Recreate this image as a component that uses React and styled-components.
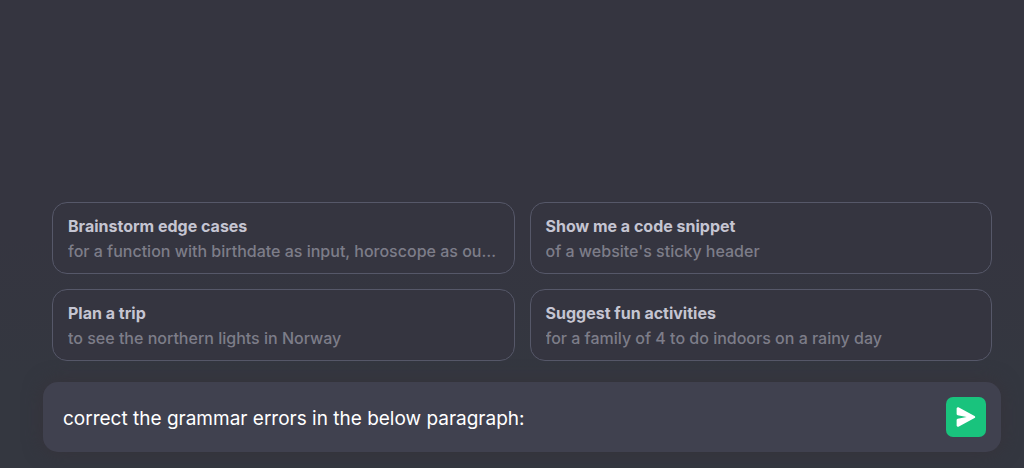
// App.jsx
import { useState } from "react";
import styled, { createGlobalStyle } from "styled-components";

const GlobalStyle = createGlobalStyle`
  * {
    box-sizing: border-box;
  }

  body {
    margin: 0;
    background: #353540;
    font-family: Inter, "Liberation Sans", sans-serif;
  }
`;

const Page = styled.main`
  display: flex;
  flex-direction: column;
  justify-content: flex-end;
  min-height: 100vh;
  padding: 16px 23px 16px 43px;
  background: linear-gradient(to bottom, #353540 50%, #343740 80%);
`;

const Suggestions = styled.div`
  display: grid;
  grid-template-columns: 1fr 1fr;
  gap: 15px;
  margin: 0 9px 21px;
`;

const SuggestionCard = styled.button`
  min-width: 0;
  padding: 11px 15px 9px;
  border: 1px solid #565869;
  border-radius: 15px;
  background: #353540;
  font-family: inherit;
  font-size: 16px;
  line-height: 25px;
  text-align: left;
  cursor: pointer;
`;

const SuggestionTitle = styled.span`
  display: block;
  color: #c5c5d2;
  font-weight: 700;
`;

const SuggestionText = styled.span`
  display: block;
  overflow: hidden;
  color: #7d7d89;
  font-weight: 500;
  text-overflow: ellipsis;
  white-space: nowrap;
`;

const Composer = styled.form`
  display: flex;
  align-items: center;
  gap: 15px;
  padding: 15px 15px 15px 20px;
  border-radius: 15px;
  background: #40414f;
  box-shadow: 0 0 19px rgba(56, 48, 56, 0.7);
`;

const MessageInput = styled.input`
  flex: 1;
  min-width: 0;
  height: 40px;
  padding: 2px 0 0;
  border: 0;
  outline: 0;
  background: transparent;
  color: #fff;
  font-family: inherit;
  font-size: 19px;
`;

const SendButton = styled.button`
  display: flex;
  padding: 10px;
  border: 0;
  border-radius: 7px;
  background: #19c37d;
  color: #fff;
  cursor: pointer;
`;

const suggestions = [
  {
    title: "Brainstorm edge cases",
    text: "for a function with birthdate as input, horoscope as output",
  },
  { title: "Show me a code snippet", text: "of a website's sticky header" },
  { title: "Plan a trip", text: "to see the northern lights in Norway" },
  {
    title: "Suggest fun activities",
    text: "for a family of 4 to do indoors on a rainy day",
  },
];

function SendIcon() {
  return (
    <svg width="20" height="20" viewBox="0 0 16 16" aria-hidden="true">
      <path
        d="M.5 1.163A1 1 0 0 1 1.97.28l12.868 6.837a1 1 0 0 1 0 1.766L1.969 15.72A1 1 0 0 1 .5 14.836V10.33a1 1 0 0 1 .816-.983L8.5 8 1.316 6.653A1 1 0 0 1 .5 5.67V1.163Z"
        fill="currentColor"
      />
    </svg>
  );
}

export default function App() {
  const [message, setMessage] = useState(
    "correct the grammar errors in the below paragraph:"
  );

  return (
    <>
      <GlobalStyle />
      <Page>
        <Suggestions>
          {suggestions.map(({ title, text }) => (
            <SuggestionCard
              key={title}
              type="button"
              onClick={() => setMessage(`${title} ${text}`)}
            >
              <SuggestionTitle>{title}</SuggestionTitle>
              <SuggestionText>{text}</SuggestionText>
            </SuggestionCard>
          ))}
        </Suggestions>
        <Composer onSubmit={(event) => event.preventDefault()}>
          <MessageInput
            aria-label="Message"
            value={message}
            onChange={(event) => setMessage(event.target.value)}
          />
          <SendButton type="submit" aria-label="Send message">
            <SendIcon />
          </SendButton>
        </Composer>
      </Page>
    </>
  );
}
